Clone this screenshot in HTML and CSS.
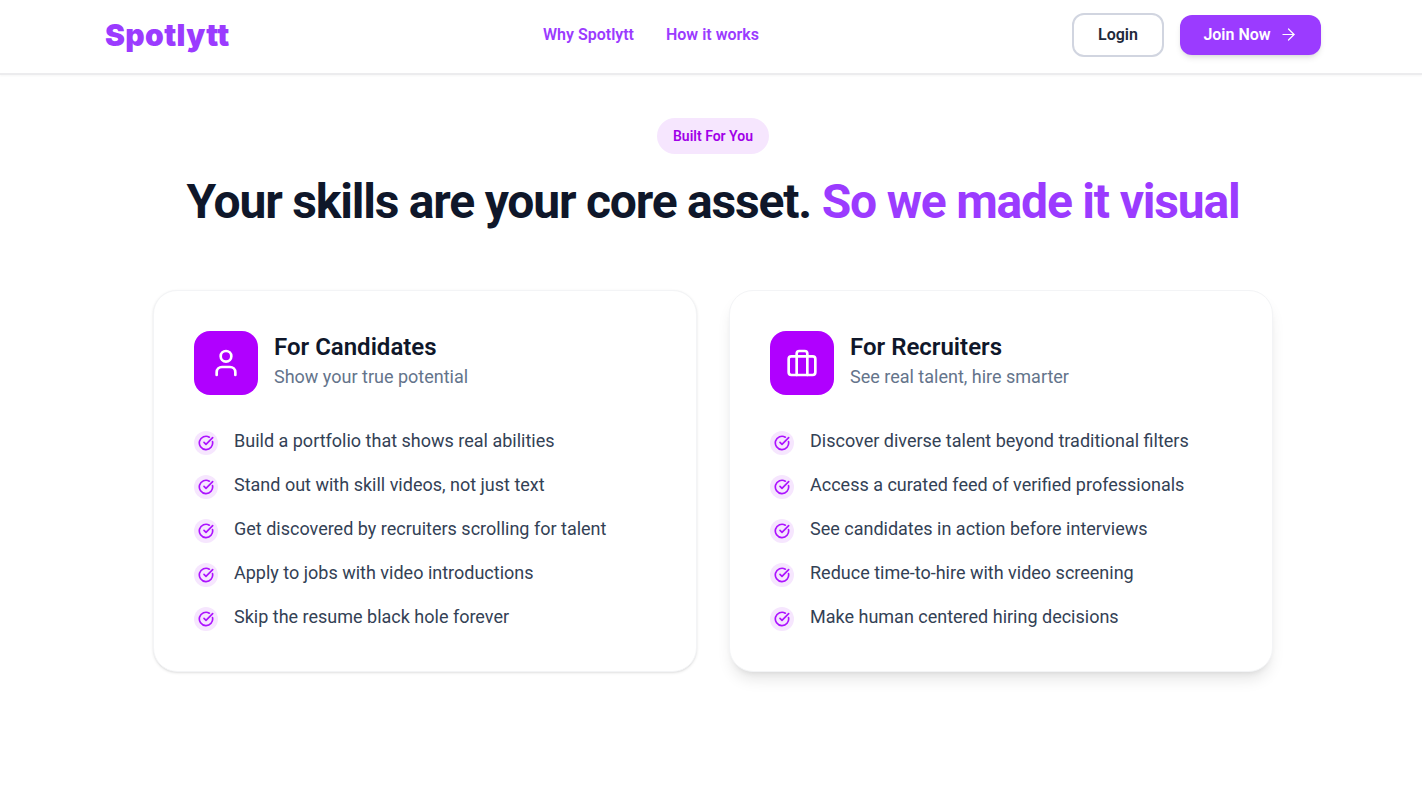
FILE: index.html
```html
<!DOCTYPE html>
<html>
<head>
    <title>Spotlytt</title>
    <link rel="stylesheet" href="styles.css">
</head>
<body>
    <nav class="navbar">
        <a class="logo">Spotlytt</a>
        <div class="nav-links">
            <a>Why Spotlytt</a>
            <a>How it works</a>
        </div>
        <div class="nav-actions">
            <button class="btn-login">Login</button>
            <button class="btn-join">Join Now
                <svg width="19" height="19" viewBox="0 0 24 24" fill="none" stroke="currentColor" stroke-width="1.5" stroke-linecap="round" stroke-linejoin="round"><path d="M5 12h14"/><path d="m12 5 7 7-7 7"/></svg>
            </button>
        </div>
    </nav>

    <main class="section">
        <span class="pill">Built For You</span>
        <h1>Your skills are your core asset. <span>So we made it visual</span></h1>

        <div class="cards">
            <div class="card">
                <div class="card-head">
                    <div class="card-icon">
                        <svg width="32" height="32" viewBox="0 0 24 24" fill="none" stroke="currentColor" stroke-width="2" stroke-linecap="round" stroke-linejoin="round"><path d="M19 21v-2a4 4 0 0 0-4-4H9a4 4 0 0 0-4 4v2"/><circle cx="12" cy="7" r="4"/></svg>
                    </div>
                    <div>
                        <h2>For Candidates</h2>
                        <p>Show your true potential</p>
                    </div>
                </div>
                <ul>
                    <li><span class="check"><svg width="16" height="16" viewBox="0 0 24 24" fill="none" stroke="currentColor" stroke-width="2.5" stroke-linecap="round" stroke-linejoin="round"><path d="M21.8 10A10 10 0 1 1 17 3.3"/><path d="m9 11 3 3L22 4"/></svg></span>Build a portfolio that shows real abilities</li>
                    <li><span class="check"><svg width="16" height="16" viewBox="0 0 24 24" fill="none" stroke="currentColor" stroke-width="2.5" stroke-linecap="round" stroke-linejoin="round"><path d="M21.8 10A10 10 0 1 1 17 3.3"/><path d="m9 11 3 3L22 4"/></svg></span>Stand out with skill videos, not just text</li>
                    <li><span class="check"><svg width="16" height="16" viewBox="0 0 24 24" fill="none" stroke="currentColor" stroke-width="2.5" stroke-linecap="round" stroke-linejoin="round"><path d="M21.8 10A10 10 0 1 1 17 3.3"/><path d="m9 11 3 3L22 4"/></svg></span>Get discovered by recruiters scrolling for talent</li>
                    <li><span class="check"><svg width="16" height="16" viewBox="0 0 24 24" fill="none" stroke="currentColor" stroke-width="2.5" stroke-linecap="round" stroke-linejoin="round"><path d="M21.8 10A10 10 0 1 1 17 3.3"/><path d="m9 11 3 3L22 4"/></svg></span>Apply to jobs with video introductions</li>
                    <li><span class="check"><svg width="16" height="16" viewBox="0 0 24 24" fill="none" stroke="currentColor" stroke-width="2.5" stroke-linecap="round" stroke-linejoin="round"><path d="M21.8 10A10 10 0 1 1 17 3.3"/><path d="m9 11 3 3L22 4"/></svg></span>Skip the resume black hole forever</li>
                </ul>
            </div>

            <div class="card card-raised">
                <div class="card-head">
                    <div class="card-icon">
                        <svg width="32" height="32" viewBox="0 0 24 24" fill="none" stroke="currentColor" stroke-width="2" stroke-linecap="round" stroke-linejoin="round"><rect x="2" y="7" width="20" height="14" rx="2"/><path d="M16 21V5a2 2 0 0 0-2-2h-4a2 2 0 0 0-2 2v16"/></svg>
                    </div>
                    <div>
                        <h2>For Recruiters</h2>
                        <p>See real talent, hire smarter</p>
                    </div>
                </div>
                <ul>
                    <li><span class="check"><svg width="16" height="16" viewBox="0 0 24 24" fill="none" stroke="currentColor" stroke-width="2.5" stroke-linecap="round" stroke-linejoin="round"><path d="M21.8 10A10 10 0 1 1 17 3.3"/><path d="m9 11 3 3L22 4"/></svg></span>Discover diverse talent beyond traditional filters</li>
                    <li><span class="check"><svg width="16" height="16" viewBox="0 0 24 24" fill="none" stroke="currentColor" stroke-width="2.5" stroke-linecap="round" stroke-linejoin="round"><path d="M21.8 10A10 10 0 1 1 17 3.3"/><path d="m9 11 3 3L22 4"/></svg></span>Access a curated feed of verified professionals</li>
                    <li><span class="check"><svg width="16" height="16" viewBox="0 0 24 24" fill="none" stroke="currentColor" stroke-width="2.5" stroke-linecap="round" stroke-linejoin="round"><path d="M21.8 10A10 10 0 1 1 17 3.3"/><path d="m9 11 3 3L22 4"/></svg></span>See candidates in action before interviews</li>
                    <li><span class="check"><svg width="16" height="16" viewBox="0 0 24 24" fill="none" stroke="currentColor" stroke-width="2.5" stroke-linecap="round" stroke-linejoin="round"><path d="M21.8 10A10 10 0 1 1 17 3.3"/><path d="m9 11 3 3L22 4"/></svg></span>Reduce time-to-hire with video screening</li>
                    <li><span class="check"><svg width="16" height="16" viewBox="0 0 24 24" fill="none" stroke="currentColor" stroke-width="2.5" stroke-linecap="round" stroke-linejoin="round"><path d="M21.8 10A10 10 0 1 1 17 3.3"/><path d="m9 11 3 3L22 4"/></svg></span>Make human centered hiring decisions</li>
                </ul>
            </div>
        </div>
    </main>
</body>
</html>
```

FILE: styles.css
```css
* {
    box-sizing: border-box;
}
body {
    margin: 0;
    min-height: 100vh;
    font-family: Roboto, sans-serif;
    background: #fff;
    color: #0f172a;
}
.navbar {
    height: 75px;
    padding: 0 101px 4px 105px;
    display: flex;
    justify-content: space-between;
    align-items: center;
    border-bottom: 2px solid #ececee;
    box-shadow: 0 1px 2px rgba(0,0,0,0.04);
}
.logo {
    width: 125px;
    font-family: Inter, sans-serif;
    font-size: 30px;
    font-weight: 900;
    letter-spacing: 0.35px;
    color: #9b3bff;
}
.nav-links {
    display: flex;
    gap: 32px;
    font-size: 16px;
    font-weight: 600;
    color: #9b3bff;
}
.nav-actions {
    display: flex;
    justify-content: flex-end;
    align-items: center;
    gap: 16px;
}
button {
    font-family: Roboto, sans-serif;
    font-size: 16px;
    font-weight: 600;
    cursor: pointer;
}
.btn-login {
    width: 92px;
    height: 44px;
    background: #fff;
    color: #1e293b;
    border: 2px solid #d1d5e0;
    border-radius: 12px;
}
.btn-join {
    width: 141px;
    height: 40px;
    display: flex;
    align-items: center;
    justify-content: center;
    gap: 8px;
    background: #9b3bff;
    color: #fff;
    border: none;
    border-radius: 12px;
    box-shadow: 0 4px 6px -1px rgba(0,0,0,0.1), 0 2px 4px -2px rgba(0,0,0,0.1);
}
.section {
    display: flex;
    flex-direction: column;
    align-items: center;
    padding: 43px 0 80px 4px;
}
.pill {
    height: 36px;
    padding: 0 16px;
    display: flex;
    align-items: center;
    font-size: 14px;
    font-weight: 600;
    color: #a000e8;
    background: #f6e6fe;
    border-radius: 18px;
}
h1 {
    margin: 20px 0 0;
    font-size: 48px;
    line-height: 56px;
    font-weight: 700;
    letter-spacing: -1.2px;
    color: #0f172a;
}
h1 span {
    color: #9b3bff;
}
.cards {
    margin-top: 60px;
    display: grid;
    grid-template-columns: 544px 544px;
    gap: 32px;
}
.card {
    height: 382px;
    padding: 40px;
    background: #fff;
    border: 1px solid #f3f4f6;
    border-radius: 24px;
    box-shadow: 0 1px 3px rgba(0,0,0,0.1), 0 1px 2px -1px rgba(0,0,0,0.1);
}
.card-raised {
    box-shadow: 0 10px 15px -3px rgba(0,0,0,0.1), 0 4px 6px -4px rgba(0,0,0,0.1);
}
.card-head {
    display: flex;
    gap: 16px;
    margin-bottom: 32px;
}
.card-icon {
    width: 64px;
    height: 64px;
    display: flex;
    align-items: center;
    justify-content: center;
    color: #fff;
    background: #b000ff;
    border-radius: 16px;
}
h2 {
    margin: 0;
    font-size: 24px;
    line-height: 32px;
    font-weight: 600;
    color: #0f172a;
}
.card-head p {
    margin: 0;
    font-size: 18px;
    line-height: 28px;
    color: #64748b;
}
ul {
    list-style: none;
    margin: 0;
    padding: 0;
    display: flex;
    flex-direction: column;
    gap: 16px;
}
li {
    display: flex;
    align-items: flex-start;
    gap: 16px;
    font-size: 18px;
    line-height: 28px;
    color: #334155;
}
.check {
    width: 24px;
    height: 24px;
    margin-top: 4px;
    flex-shrink: 0;
    display: flex;
    align-items: center;
    justify-content: center;
    color: #ac12ff;
    background: #f6e6fe;
    border-radius: 50%;
}
```
